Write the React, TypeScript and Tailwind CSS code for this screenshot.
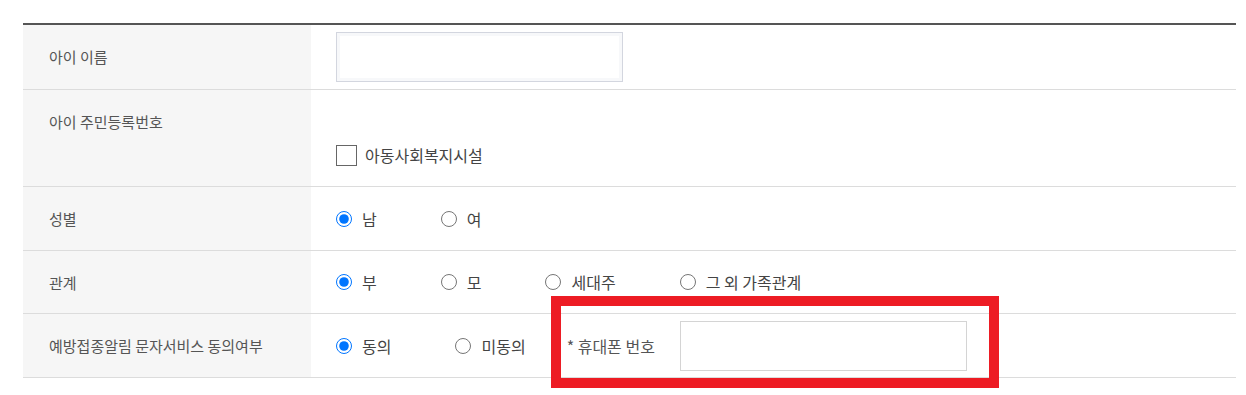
import React from 'react';

// Row label cell: grey column, text sits near the top of the row
const Label: React.FC<{ children: React.ReactNode }> = ({ children }) => (
  <div className="w-[288px] shrink-0 bg-[#f6f6f6] pl-[26px] pt-[21px] text-[15px] leading-[22px] text-[#555]">
    {children}
  </div>
);

interface RadioProps {
  name: string;
  label: string;
  checked?: boolean;
  last?: boolean;
}

const Radio: React.FC<RadioProps> = ({ name, label, checked, last }) => (
  <label className={`flex items-center ${last ? '' : 'mr-[64px]'}`}>
    <input
      type="radio"
      name={name}
      defaultChecked={checked}
      className="m-0 w-4 h-4 accent-[#0075ff]"
    />
    <span className="ml-[10px] text-[16px] leading-[22px] text-[#444]">{label}</span>
  </label>
);

export default function App() {
  return (
    <div
      className="relative w-[1246px] h-[395px] bg-white"
      style={{ fontFamily: '"Noto Sans CJK KR", "Noto Sans", sans-serif' }}
    >
      <div className="ml-[23px] pt-[23px] w-[1213px]">
        <div className="border-t-2 border-[#555]">
          {/* 아이 이름 */}
          <div className="flex h-[65px] border-b border-[#dcdcdc]">
            <Label>아이 이름</Label>
            <div className="flex-1 pl-[25px] pt-[7px]">
              <input
                type="text"
                className="block w-[287px] h-[50px] border border-[#d3d6df] bg-white shadow-[inset_0_0_0_3px_#f7f8fa] outline-none"
              />
            </div>
          </div>

          {/* 아이 주민등록번호 */}
          <div className="flex h-[97px] border-b border-[#dcdcdc]">
            <Label>아이 주민등록번호</Label>
            <div className="flex-1 pl-[25px] pt-[54px]">
              <label className="flex items-center">
                <input
                  type="checkbox"
                  className="m-0 w-[21px] h-[21px] appearance-none border border-[#666] bg-white"
                />
                <span className="ml-[8px] text-[16px] leading-[22px] text-[#444]">
                  아동사회복지시설
                </span>
              </label>
            </div>
          </div>

          {/* 성별 */}
          <div className="flex h-[64px] border-b border-[#dcdcdc]">
            <Label>성별</Label>
            <div className="flex-1 flex items-center pl-[25px]">
              <Radio name="gender" label="남" checked />
              <Radio name="gender" label="여" last />
            </div>
          </div>

          {/* 관계 */}
          <div className="flex h-[63px] border-b border-[#dcdcdc]">
            <Label>관계</Label>
            <div className="flex-1 flex items-center pl-[25px]">
              <Radio name="relation" label="부" checked />
              <Radio name="relation" label="모" />
              <Radio name="relation" label="세대주" />
              <Radio name="relation" label="그 외 가족관계" last />
            </div>
          </div>

          {/* 문자서비스 동의 */}
          <div className="flex h-[64px] border-b border-[#dcdcdc]">
            <Label>예방접종알림 문자서비스 동의여부</Label>
            <div className="flex-1 flex items-center pl-[25px]">
              <Radio name="sms" label="동의" checked />
              <Radio name="sms" label="미동의" last />
              <span className="ml-[41px] w-[113px] shrink-0 text-[16px] leading-[22px] text-[#555]">
                * 휴대폰 번호
              </span>
              <input
                type="text"
                className="block w-[287px] h-[50px] border border-[#d4d4d4] bg-white outline-none"
              />
            </div>
          </div>
        </div>
      </div>

      {/* red annotation box */}
      <div className="absolute left-[551px] top-[296px] w-[448px] h-[92px] border-[10px] border-[#ed1c24]" />
    </div>
  );
}
